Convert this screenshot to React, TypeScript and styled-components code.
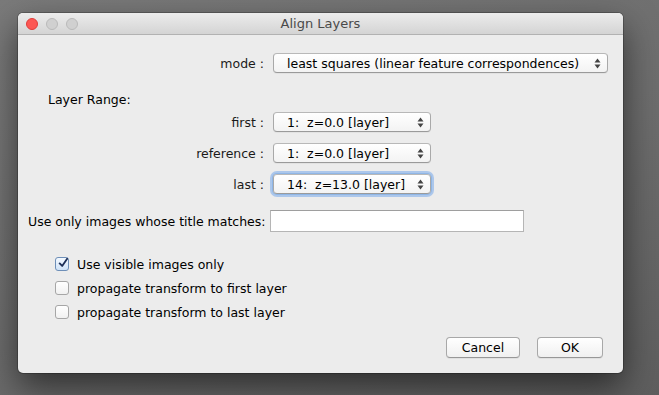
import { Fragment } from 'react';
import styled, { createGlobalStyle } from 'styled-components';

const GlobalStyle = createGlobalStyle`
  html, body {
    margin: 0;
    padding: 0;
  }
  body {
    font-family: "DejaVu Sans", "Liberation Sans", sans-serif;
    font-size: 12.5px;
    color: #000;
    background: #6f6f6f;
  }
`;

const Desktop = styled.div`
  width: 659px;
  height: 395px;
  box-sizing: border-box;
  padding: 13px 0 0 18px;
  overflow: hidden;
  background: linear-gradient(160deg, #7a7a7a 0%, #6c6c6c 55%, #5e5e5e 100%);
`;

const Window = styled.div`
  width: 605px;
  height: 360px;
  display: flex;
  flex-direction: column;
  background: #ececec;
  border-radius: 5px;
  overflow: hidden;
  box-shadow: 0 0 0 1px rgba(0, 0, 0, 0.22), 0 14px 34px rgba(0, 0, 0, 0.55);
`;

const TitleBar = styled.div`
  height: 21px;
  flex: none;
  display: grid;
  grid-template-columns: 70px 1fr 70px;
  align-items: center;
  background: linear-gradient(#ececec, #d4d4d4);
  border-bottom: 1px solid #b2b2b2;
`;

const Lights = styled.div`
  display: flex;
  gap: 8px;
  padding-left: 8px;
`;

const Light = styled.span<{ $color: string; $border: string }>`
  width: 12px;
  height: 12px;
  border-radius: 50%;
  box-sizing: border-box;
  background: ${(p) => p.$color};
  border: 1px solid ${(p) => p.$border};
`;

const Title = styled.div`
  text-align: center;
  font-size: 13px;
  color: #4a4a4a;
`;

const Body = styled.div`
  flex: 1;
  display: flex;
  flex-direction: column;
  padding: 18px 20px 0 10px;
`;

const FieldGrid = styled.div<{ $top: number; $gap: number }>`
  display: grid;
  grid-template-columns: 236px auto;
  column-gap: 9px;
  row-gap: ${(p) => p.$gap}px;
  align-items: center;
  margin-top: ${(p) => p.$top}px;
`;

const Label = styled.div`
  text-align: right;
  color: #1a1a1a;
`;

const SectionTitle = styled.div`
  margin-top: 19px;
  padding-left: 20px;
  line-height: 16px;
`;

const Select = styled.div<{ $width: number; $focused?: boolean }>`
  width: ${(p) => p.$width}px;
  height: 20px;
  box-sizing: border-box;
  display: flex;
  align-items: center;
  justify-content: space-between;
  padding: 0 6px 0 13px;
  border: 1px solid #a9a9a9;
  border-top-color: #b8b8b8;
  border-bottom-color: #9a9a9a;
  border-radius: 4px;
  background: linear-gradient(#ffffff, #f3f3f3);
  white-space: pre;
  box-shadow: ${(p) =>
    p.$focused
      ? '0 0 0 1px #8fb6e6, 0 0 0 3px rgba(120, 170, 235, 0.55)'
      : '0 1px 0 rgba(0, 0, 0, 0.04)'};
`;

const Arrows = () => (
  <svg width="7" height="11" viewBox="0 0 7 11">
    <path d="M3.5 0.5 L6.5 4.5 L0.5 4.5 Z" fill="#444" />
    <path d="M3.5 10.5 L6.5 6.5 L0.5 6.5 Z" fill="#444" />
  </svg>
);

const MatchRow = styled.div`
  display: flex;
  align-items: center;
  gap: 4px;
  margin-top: 16px;
`;

const TextInput = styled.div`
  width: 254px;
  height: 22px;
  box-sizing: border-box;
  background: #fff;
  border: 1px solid #b5b5b5;
  border-top-color: #9e9e9e;
`;

const Checks = styled.div`
  display: flex;
  flex-direction: column;
  margin-top: 20px;
  padding-left: 27px;
`;

const CheckRow = styled.label`
  display: flex;
  align-items: center;
  gap: 8px;
  height: 24px;
`;

const Box = styled.span<{ $checked?: boolean }>`
  width: 14px;
  height: 14px;
  box-sizing: border-box;
  border-radius: 3px;
  border: 1px solid ${(p) => (p.$checked ? '#6e8fb8' : '#a6a6a6')};
  background: ${(p) =>
    p.$checked ? 'linear-gradient(#f4f9ff, #cfe2f7)' : 'linear-gradient(#ffffff, #f1f1f1)'};
  display: flex;
  align-items: center;
  justify-content: center;
  overflow: visible;
`;

const CheckMark = () => (
  <svg width="12" height="12" viewBox="0 0 12 12" style={{ marginTop: -3, marginLeft: 2 }}>
    <path d="M2 6.5 L5 9.5 L11 1" stroke="#1d2f57" strokeWidth="2.2" fill="none" strokeLinecap="round" strokeLinejoin="round" />
  </svg>
);

const Buttons = styled.div`
  display: flex;
  justify-content: flex-end;
  gap: 17px;
  margin-top: 13px;
`;

const Button = styled.button<{ $width: number }>`
  width: ${(p) => p.$width}px;
  height: 21px;
  padding: 0;
  font-family: inherit;
  font-size: 12.5px;
  color: #000;
  border: 1px solid #a8a8a8;
  border-bottom-color: #979797;
  border-radius: 4px;
  background: linear-gradient(#ffffff, #f0f0f0);
  box-shadow: 0 1px 0 rgba(0, 0, 0, 0.05);
`;

const checks = [
  { label: 'Use visible images only', checked: true },
  { label: 'propagate transform to first layer', checked: false },
  { label: 'propagate transform to last layer', checked: false },
];

const layers = [
  { label: 'first :', value: '1:  z=0.0 [layer]' },
  { label: 'reference :', value: '1:  z=0.0 [layer]' },
  { label: 'last :', value: '14:  z=13.0 [layer]', focused: true },
];

export default function App() {
  return (
    <Desktop>
      <GlobalStyle />
      <Window>
        <TitleBar>
          <Lights>
            <Light $color="#fc5753" $border="#df3d3a" />
            <Light $color="#d0d0d0" $border="#b9b9b9" />
            <Light $color="#d0d0d0" $border="#b9b9b9" />
          </Lights>
          <Title>Align Layers</Title>
          <span />
        </TitleBar>
        <Body>
          <FieldGrid $top={0} $gap={0}>
            <Label>mode :</Label>
            <Select $width={335}>
              <span>least squares (linear feature correspondences)</span>
              <Arrows />
            </Select>
          </FieldGrid>
          <SectionTitle>Layer Range:</SectionTitle>
          <FieldGrid $top={4} $gap={11}>
            {layers.map((l) => (
              <Fragment key={l.label}>
                <Label>{l.label}</Label>
                <Select $width={158} $focused={l.focused}>
                  <span>{l.value}</span>
                  <Arrows />
                </Select>
              </Fragment>
            ))}
          </FieldGrid>
          <MatchRow>
            <span>Use only images whose title matches:</span>
            <TextInput />
          </MatchRow>
          <Checks>
            {checks.map((c) => (
              <CheckRow key={c.label}>
                <Box $checked={c.checked}>{c.checked && <CheckMark />}</Box>
                <span>{c.label}</span>
              </CheckRow>
            ))}
          </Checks>
          <Buttons>
            <Button $width={74}>Cancel</Button>
            <Button $width={66}>OK</Button>
          </Buttons>
        </Body>
      </Window>
    </Desktop>
  );
}
